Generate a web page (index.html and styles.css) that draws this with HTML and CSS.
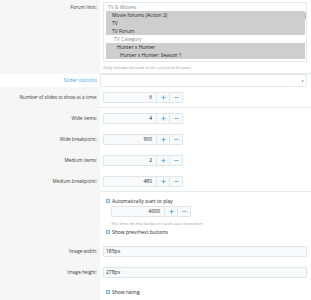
FILE: index.html
```html
<!DOCTYPE html>
<html lang="en">
<head>
    <meta charset="UTF-8">
    <title>Slider options</title>
    <link rel="stylesheet" href="styles.css">
</head>
<body>
    <div class="form">
        <dl class="row row-forum">
            <dt>Forum limit:</dt>
            <dd>
                <div class="select">
                    <div class="opt group">TV &amp; Movies</div>
                    <div class="sel">
                        <div class="opt d1">Movie forums (Action 2)</div>
                        <div class="opt d1">TV</div>
                        <div class="opt d1">TV Forum</div>
                    </div>
                    <div class="opt group d2">TV Category</div>
                    <div class="sel">
                        <div class="opt d3">Hunter x Hunter</div>
                        <div class="opt d4">Hunter x Hunter: Season 1</div>
                    </div>
                    <span class="scroll-thumb"></span>
                </div>
                <div class="hint">Only include threads in the selected forums.</div>
            </dd>
        </dl>

        <dl class="row row-header">
            <dt>Slider options</dt>
            <dd><div class="header-box"><span class="caret"></span></div></dd>
        </dl>

        <dl class="row row-sep">
            <dt>Number of slides to show at a time:</dt>
            <dd>
                <div class="spin">
                    <span class="val">6</span>
                    <span class="btn"><svg width="5" height="5" viewBox="0 0 5 5"><path d="M2.5 0.5v4M0.5 2.5h4" /></svg></span>
                    <span class="btn"><svg width="5" height="5" viewBox="0 0 5 5"><path d="M0.5 2.5h4" /></svg></span>
                </div>
            </dd>
        </dl>

        <dl class="row">
            <dt>Wide items:</dt>
            <dd>
                <div class="spin">
                    <span class="val">4</span>
                    <span class="btn"><svg width="5" height="5" viewBox="0 0 5 5"><path d="M2.5 0.5v4M0.5 2.5h4" /></svg></span>
                    <span class="btn"><svg width="5" height="5" viewBox="0 0 5 5"><path d="M0.5 2.5h4" /></svg></span>
                </div>
            </dd>
        </dl>

        <dl class="row">
            <dt>Wide breakpoint:</dt>
            <dd>
                <div class="spin">
                    <span class="val">900</span>
                    <span class="btn"><svg width="5" height="5" viewBox="0 0 5 5"><path d="M2.5 0.5v4M0.5 2.5h4" /></svg></span>
                    <span class="btn"><svg width="5" height="5" viewBox="0 0 5 5"><path d="M0.5 2.5h4" /></svg></span>
                </div>
            </dd>
        </dl>

        <dl class="row">
            <dt>Medium items:</dt>
            <dd>
                <div class="spin">
                    <span class="val">2</span>
                    <span class="btn"><svg width="5" height="5" viewBox="0 0 5 5"><path d="M2.5 0.5v4M0.5 2.5h4" /></svg></span>
                    <span class="btn"><svg width="5" height="5" viewBox="0 0 5 5"><path d="M0.5 2.5h4" /></svg></span>
                </div>
            </dd>
        </dl>

        <dl class="row row-sep">
            <dt>Medium breakpoint:</dt>
            <dd>
                <div class="spin">
                    <span class="val">480</span>
                    <span class="btn"><svg width="5" height="5" viewBox="0 0 5 5"><path d="M2.5 0.5v4M0.5 2.5h4" /></svg></span>
                    <span class="btn"><svg width="5" height="5" viewBox="0 0 5 5"><path d="M0.5 2.5h4" /></svg></span>
                </div>
            </dd>
        </dl>

        <dl class="row row-checks">
            <dt></dt>
            <dd>
                <label class="check">
                    <span class="box"><svg width="4" height="4" viewBox="0 0 4 4"><path d="M0.7 2l1 1 1.6-2.2" /></svg></span>
                    Automatically start to play
                </label>
                <div class="check-sub">
                    <div class="spin">
                        <span class="val">4000</span>
                        <span class="btn"><svg width="5" height="5" viewBox="0 0 5 5"><path d="M2.5 0.5v4M0.5 2.5h4" /></svg></span>
                        <span class="btn"><svg width="5" height="5" viewBox="0 0 5 5"><path d="M0.5 2.5h4" /></svg></span>
                    </div>
                    <div class="hint">The time (in ms) between each auto transition</div>
                </div>
                <label class="check">
                    <span class="box"><svg width="4" height="4" viewBox="0 0 4 4"><path d="M0.7 2l1 1 1.6-2.2" /></svg></span>
                    Show prev/next buttons
                </label>
            </dd>
        </dl>

        <dl class="row">
            <dt>Image width:</dt>
            <dd><div class="text">185px</div></dd>
        </dl>

        <dl class="row">
            <dt>Image height:</dt>
            <dd><div class="text">278px</div></dd>
        </dl>

        <dl class="row row-checks">
            <dt></dt>
            <dd>
                <label class="check">
                    <span class="box"><svg width="4" height="4" viewBox="0 0 4 4"><path d="M0.7 2l1 1 1.6-2.2" /></svg></span>
                    Show rating
                </label>
            </dd>
        </dl>
    </div>
</body>
</html>
```

FILE: styles.css
```css
:root {
    --label-bg: #f6f6f6;
    --line: #e6e9ec;
    --input-bg: #f8fafc;
    --input-border: #e1e6eb;
    --blue: #47a7eb;
    --muted: #9a9a9a;
    --text: #1d1d1d;
}

* {
    box-sizing: border-box;
}

body {
    margin: 0;
    font-family: 'Open Sans', sans-serif;
    font-size: 5px;
    color: var(--text);
    background: #ffffff;
}

.row {
    display: grid;
    grid-template-columns: 100px 1fr;
    margin: 0;
}

.row dt {
    background: var(--label-bg);
    text-align: right;
    padding: 5px 3px 0 0;
    line-height: 11px;
    font-size: 4.7px;
    color: #3a3a3a;
}

.row dd {
    margin: 0;
    padding: 5px 4px 5px 3px;
}

.row-sep dd {
    padding-bottom: 4px;
    border-bottom: 1px solid var(--line);
}

/* forum select */
.row-forum dt {
    padding-top: 2px;
    line-height: 10px;
}

.row-forum dd {
    padding-top: 2px;
    padding-bottom: 3px;
    border-bottom: 1px solid var(--line);
}

.select {
    position: relative;
    border: 1px solid var(--line);
    padding: 0 1px 2px 2px;
}

.opt {
    line-height: 8px;
    height: 8px;
    padding-left: 2px;
    white-space: nowrap;
}

.opt.group {
    color: #8a8a8a;
}

.sel {
    background: #cecece;
}

.d1 { padding-left: 6px; }
.d2 { padding-left: 8px; }
.d3 { padding-left: 11px; }
.d4 { padding-left: 14px; }

.scroll-thumb {
    position: absolute;
    right: 0;
    top: 10px;
    width: 1px;
    height: 6px;
    background: #b5b5b5;
}

.hint {
    margin-top: 2px;
    font-size: 4.3px;
    line-height: 6px;
    color: var(--muted);
}

/* section header */
.row-header dt {
    background: #ffffff;
    color: var(--blue);
    padding-top: 0;
    line-height: 13px;
    font-size: 5.2px;
}

.row-header dd {
    padding: 0 4px 0 0;
}

.header-box {
    height: 13px;
    border: 1px solid var(--line);
    display: flex;
    align-items: center;
    justify-content: flex-end;
    padding-right: 2px;
}

.caret {
    width: 0;
    height: 0;
    border-top: 1.5px solid transparent;
    border-bottom: 1.5px solid transparent;
    border-left: 2px solid #6a9cc4;
}

/* number boxes */
.spin {
    display: flex;
    width: 80px;
    height: 11px;
    border: 1px solid var(--input-border);
    border-radius: 1px;
    background: var(--input-bg);
}

.spin .val {
    width: 52px;
    text-align: right;
    padding-right: 4px;
    line-height: 9px;
}

.spin .btn {
    flex: 1;
    display: flex;
    align-items: center;
    justify-content: center;
    border-left: 1px solid var(--input-border);
}

.spin svg path,
.box svg path {
    fill: none;
    stroke: var(--blue);
    stroke-width: 0.8;
}

.text {
    height: 11px;
    border: 1px solid var(--input-border);
    border-radius: 1px;
    background: var(--input-bg);
    padding-left: 2px;
    line-height: 9px;
}

/* checkboxes */
.check {
    display: flex;
    align-items: center;
    height: 8px;
    padding-left: 3px;
    gap: 2px;
}

.box {
    width: 4px;
    height: 4px;
    border: 0.6px solid #7db6e2;
    background: #e9f3fc;
    display: flex;
    align-items: center;
    justify-content: center;
}

.box svg path {
    stroke-width: 0.7;
}

.check-sub {
    padding-left: 8px;
    margin: 1px 0 2px;
}

.check-sub .hint {
    margin-top: 3px;
}
```
